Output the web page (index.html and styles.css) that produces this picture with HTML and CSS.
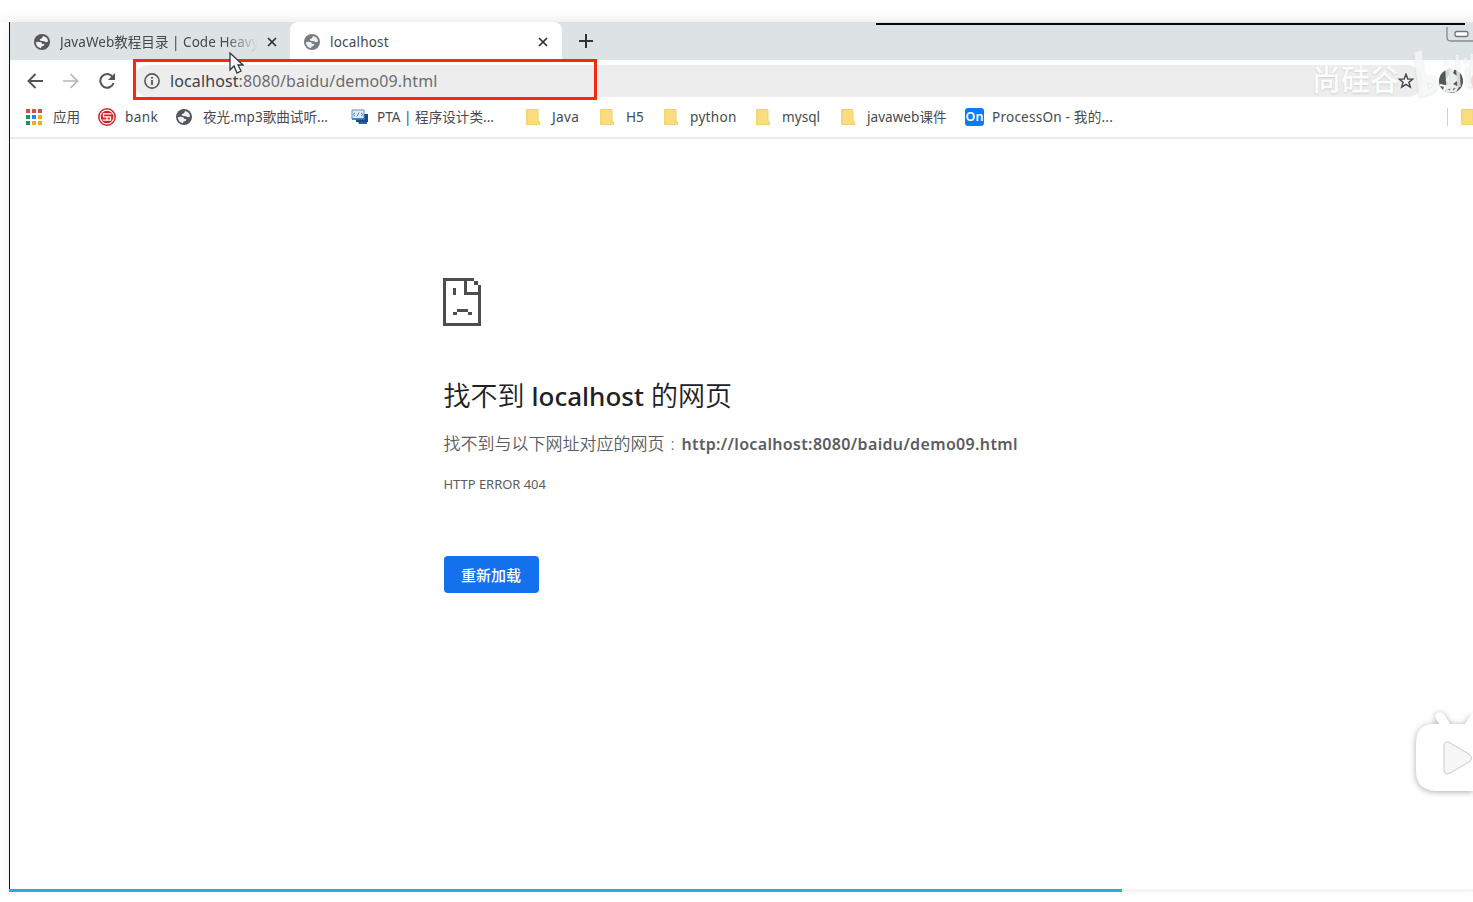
FILE: index.html
```html
<!DOCTYPE html>
<html lang="zh-CN">
<head>
<meta charset="utf-8">
<title>localhost</title>
<link rel="stylesheet" href="styles.css">
</head>
<body>
<svg class="defs" width="0" height="0">
  <symbol id="globe" viewBox="0 0 16 16"><circle cx="8" cy="8" r="8" fill="currentColor"/><path d="M1.800 8.200Q4 7.300 7.300 8.200L8 9.800 10.600 10.300 9.500 12 7.500 12.500 7 14.200Q2.500 13.500 1.800 8.200ZM9 2Q13.500 2.800 14.100 7.400L12 8.300 10 7.300 6.300 6.700 5.700 5.200 8 4.300Z" fill="#eef0f1"/></symbol>
  <symbol id="folder" viewBox="0 0 14 16"><path d="M1 0h11v12l2 1v3H1q-1 0-1-1V1q0-1 1-1Z" fill="#fbdd80"/><path d="M1 15.5h12.5V13L12 12V.5H1Z" fill="none" stroke="#efd06d"/></symbol>
  <symbol id="close" viewBox="0 0 10 10"><path d="m1 1 8 8m0-8-8 8" stroke="#2c3033" stroke-width="1.7" fill="none"/></symbol>
</svg>
<main class="window">
  <header class="tabs">
    <div class="tab">
      <svg class="globe"><use href="#globe"/></svg>
      <span class="tab-title fade">JavaWeb教程目录 | Code Heavy</span>
      <svg class="close"><use href="#close"/></svg>
    </div>
    <div class="tab active">
      <svg class="globe gray"><use href="#globe"/></svg>
      <span class="tab-title wide">localhost</span>
      <svg class="close"><use href="#close"/></svg>
    </div>
    <svg class="plus" viewBox="0 0 14 14"><path d="M7 0v14M0 7h14" stroke="#303539" stroke-width="2"/></svg>
  </header>
  <nav class="toolbar">
    <svg class="nav-icon" viewBox="0 0 16 16"><path d="M16 8H1.5M8.5 1 1.5 8l7 7" fill="none" stroke="#515458" stroke-width="1.9"/></svg>
    <svg class="nav-icon" viewBox="0 0 16 16"><path d="M0 8h14.5M7.500 1l7 7-7 7" fill="none" stroke="#b5b7b9" stroke-width="1.7"/></svg>
    <svg class="nav-icon" viewBox="0 0 16 16"><path d="M13.700 4A6.800 6.800 0 1 0 14.600 10" fill="none" stroke="#515458" stroke-width="2"/><path d="M16 0v7H9Z" fill="#515458"/></svg>
    <div class="address">
      <svg class="info" viewBox="0 0 16 16"><circle cx="8" cy="8" r="7.100" fill="none" stroke="#55585b" stroke-width="1.600"/><path d="M8 7v5M8 4v1.800" stroke="#55585b" stroke-width="1.800"/></svg>
      <span class="url"><b>localhost</b>:8080/baidu/demo09.html</span>
    </div>
  </nav>
  <nav class="bookmarks">
    <div class="mark shift apps-mark"><svg class="apps" viewBox="0 0 16 16"><path d="M0 0h4v4H0ZM6 0h4v4H6ZM12 0h4v4h-4Z" fill="#db4b3f"/><path d="M0 6h4v4H0Z" fill="#16965b"/><path d="M6 6h4v4H6Z" fill="#2583ee"/><path d="M12 6h4v4h-4ZM6 12h4v4H6ZM12 12h4v4h-4Z" fill="#efaf18"/><path d="M0 12h4v4H0Z" fill="#16965b"/></svg><span>应用</span></div>
    <div class="mark shift"><svg class="bank" viewBox="0 0 18 18"><circle cx="9" cy="9" r="8.200" fill="#fff" stroke="#cf2429" stroke-width="1.500"/><circle cx="9" cy="9" r="6.300" fill="#cf2429"/><path d="M13.500 5.800H5.500v3h7v3.400h-8M9 9v3" fill="none" stroke="#fff" stroke-width="1.300"/></svg><span>bank</span></div>
    <div class="mark shift song"><svg class="globe"><use href="#globe"/></svg><span>夜光.mp3歌曲试听...</span></div>
    <div class="mark"><svg class="pta" viewBox="0 0 18 16"><path d="M5 5h12v8H5Z" fill="#174b8d"/><path d="M7 13h9v2H8Z" fill="#2864a9"/><path d="M1 1h12v9H1Z" fill="#dcebf8" stroke="#5b91c5"/><path d="M1 10h13" stroke="#2e71b3" stroke-width="1.500"/><path d="m4 4-2 1.500L4 7m6-3 2 1.500L10 7M8 3.500l-2 4" fill="none" stroke="#5388b8"/></svg><span>PTA | 程序设计类...</span></div>
    <div class="mark folder-mark"><svg class="folder"><use href="#folder"/></svg><span>Java</span></div>
    <div class="mark"><svg class="folder"><use href="#folder"/></svg><span>H5</span></div>
    <div class="mark folder-mark"><svg class="folder"><use href="#folder"/></svg><span>python</span></div>
    <div class="mark"><svg class="folder"><use href="#folder"/></svg><span>mysql</span></div>
    <div class="mark"><svg class="folder"><use href="#folder"/></svg><span>javaweb课件</span></div>
    <div class="mark shift process"><i class="on">On</i><span>ProcessOn - 我的...</span></div>
    <div class="mark more"><svg class="folder"><use href="#folder"/></svg></div>
  </nav>
  <section class="page">
    <svg class="sad" viewBox="0 0 38 48"><path d="M0 0h31v3H3v42h32V17H21V3h3v11h11V7h3v41H0ZM31 3h4v4h-4ZM10 10h3v7h-3ZM14 31h11v3H14ZM10 34h4v3h-4ZM25 34h4v3h-4Z" fill="#4d4d4f"/></svg>
    <h1>找不到 <b>localhost</b> 的网页</h1>
    <p class="summary"><span>找不到与以下网址对应的网页<em>:</em></span><b>http://localhost:8080/baidu/demo09.html</b></p>
    <p class="code">HTTP ERROR 404</p>
    <button class="reload">重新加载</button>
  </section>
</main>
<div class="progress"><div class="played"></div></div>
<div class="highlight"></div>
<div class="topline"></div>
<svg class="minimize" viewBox="0 0 27 16"><path d="M1 0v10q0 4 4 4h22" fill="none" stroke="#858b8f" stroke-width="1.300"/><rect x="9" y="4.500" width="13" height="5" rx="2" fill="#fff" stroke="#6e7478" stroke-width="1.300"/></svg>
<svg class="star" viewBox="0 0 16 16"><path d="m8 1.200 1.800 4.700 5 .2-3.900 3.100 1.400 4.900L8 11.300l-4.300 2.800 1.400-4.900L1.200 6.100l5-.2Z" fill="#f8f8f8" stroke="#45494c" stroke-width="1.500"/></svg>
<svg class="profile" viewBox="0 0 36 28"><circle cx="14" cy="14" r="12" fill="#53595b"/><path d="M11 1 18 2 16 6 20 9 20 14 16 17 22 20 19 25 9 26 7 20 12 17 9 13 12 8Z" fill="#eceeee"/><path d="m3 18 5 1-1 5" stroke="#fff" stroke-width="2" fill="none"/><path d="m11 21 2 2m5-2-2 2" stroke="#777c7d" stroke-width="1.500"/><circle cx="45" cy="14" r="11" fill="#e96251"/></svg>
<div class="watermark">尚硅谷</div>
<svg class="logo" viewBox="0 0 62 54"><path d="m3 4 8-3 2 25q15-2 15 8-1 11-20 14Z" fill="#f5f6f6"/><path d="m17 34 5 2-4 4Z" fill="#fff" stroke="#e1e2e2"/><path d="m36 20 1 20M46 6l2 32M35 11l1 4M56 18l1 20M54 9l1 4M61 5v33M40 17l2 4" fill="none" stroke="#f5f6f6" stroke-width="3.500"/></svg>
<svg class="cursor" viewBox="0 0 15 22"><path d="M1 1v17l4-4 3 7 4-2-3-6h5Z" fill="#f7f8f9" stroke="#34383b" stroke-width="1.300"/></svg>
<svg class="player" viewBox="0 0 77 100"><path d="M37 28h6l-3-5q-2-4 1-6 4-2 7 1l6 10h15l6-9q4-4 9 0v76H40q-20-1-20-20V48q0-20 17-20Z" fill="#fff"/><path d="M48 50v23q0 7 6 4l19-11q5-4 0-8L54 47q-6-3-6 3Z" fill="#f7f7f7" stroke="#c9c9c9" stroke-width="1"/></svg>
</body>
</html>
```
FILE: styles.css
```css
* { box-sizing: border-box; }
html, body { margin: 0; height: 100%; overflow: hidden; background: #fff; }
body { padding: 22px 0 0 9px; font-family: "Noto Sans", "Noto Sans CJK SC", sans-serif; background: linear-gradient(#fff 10px, #f8f8f8 22px, #fff 23px); }
svg { display: block; flex: none; }
.defs { position: absolute; }
.window { height: 867px; border-left: 1px solid #111; background: #fff; box-shadow: 0 0 10px #00000010; }
.tabs { height: 38px; background: #dde2e5; display: flex; align-items: center; }
.tab { width: 280px; height: 38px; padding: 1px 12px 0 24px; display: flex; align-items: center; }
.tab.active { width: 272px; padding-left: 14px; background: #fff; border-radius: 8px 8px 0 0; }
.globe { width: 16px; height: 16px; color: #54585b; }
.globe.gray { color: #777b83; }
.tab-title { margin-left: 10px; width: 199px; overflow: hidden; white-space: nowrap; font-size: 13.5px; line-height: 20px; letter-spacing: .2px; color: #45494d; }
.fade { letter-spacing: .05px; height: 22px; line-height: 22px; width: 198px; -webkit-mask-image: linear-gradient(90deg, #000 165px, transparent 198px); }
.wide { width: 200px; }
.tab-title + .close { width: 10px; height: 10px; margin-left: 9px; }
.tab.active .close { margin-left: 8px; }
.plus { width: 14px; height: 14px; margin-left: 17px; }
.toolbar { height: 42px; display: flex; align-items: center; gap: 20px; padding-left: 17px; }
.nav-icon { width: 16px; height: 16px; }
.address { width: 1290px; height: 32px; margin-left: -2px; padding-left: 11px; display: flex; align-items: center; gap: 10px; background: #ededed; border-radius: 16px; }
.info { width: 16px; height: 16px; }
.url { font-size: 16px; letter-spacing: .11px; color: #6b6e71; white-space: nowrap; }
.url b { font-weight: 400; color: #3d4144; }
.bookmarks { height: 37px; padding: 0 0 5px 16px; display: grid; grid-template-columns: 72px 78px 175px 175px 74px 64px 92px 85px 124px 482px 26px; align-items: center; border-bottom: 2px solid #ebebeb; font-size: 13.6px; color: #474b4f; overflow: hidden; }
.mark { display: grid; grid-template-columns: 26px auto; align-items: center; justify-content: start; white-space: nowrap; }
.mark span { line-height: 20px; }
.folder-mark { letter-spacing: .3px; }
.shift { grid-template-columns: 27px auto; letter-spacing: .35px; }
.apps-mark { letter-spacing: 0; }
.song { letter-spacing: 0; }
.process { letter-spacing: .2px; }
.apps { width: 16px; height: 16px; }
.bank { width: 18px; height: 18px; }
.pta { width: 18px; height: 16px; }
.folder { width: 14px; height: 16px; }
.on { width: 19px; height: 18px; border-radius: 3px; background: #087cf7; color: #fff; font: 600 12.5px/18px "Noto Sans", sans-serif; letter-spacing: 0; text-align: center; }
.more { height: 18px; border-left: 1px solid #d0d0d0; padding-left: 13px; }
.page { padding: 139px 0 0 433.500px; }
.sad { width: 38px; height: 48px; margin-left: -.500px; }
h1 { margin: 50px 0 0; height: 40px; font: 350 27px/40px "Noto Sans", "Noto Sans CJK SC", sans-serif; color: #202124; white-space: nowrap; }
h1 b { font-weight: 500; font-size: 26px; }
p { margin: 0; white-space: nowrap; color: #5b5d60; }
.summary { margin-top: 16px; height: 24px; font-size: 17px; line-height: 24px; display: flex; }
.summary span { width: 238px; font-weight: 350; }
.summary em { font-style: normal; padding-left: 6px; }
.summary b { font-size: 16px; font-weight: 600; letter-spacing: .34px; }
.code { margin-top: 18px; font-size: 13px; line-height: 20px; letter-spacing: -.04px; }
.reload { display: block; margin: 62px 0 0; width: 95px; height: 37px; border: 0; border-radius: 4px; background: #1471ee; color: #fff; font: 500 15px "Noto Sans CJK SC", sans-serif; }
.progress { height: 3px; background: #f4f4f4; }
.played { height: 3px; width: 1113px; background: #23ade5; }
.highlight { position: absolute; left: 133px; top: 59px; width: 464px; height: 41px; border: 3px solid #f5290c; }
.topline { position: absolute; left: 876px; top: 23px; width: 589px; height: 2px; background: #080808; }
.minimize { position: absolute; left: 1446px; top: 27px; width: 27px; height: 16px; }
.star { position: absolute; left: 1398px; top: 73px; width: 16px; height: 16px; }
.profile { position: absolute; left: 1437px; top: 67px; width: 36px; height: 28px; overflow: hidden; }
.watermark { position: absolute; left: 1312px; top: 57px; font: 500 29px/42px "Noto Sans CJK SC", sans-serif; color: #fffffff0; text-shadow: 0 1px 2px #0002; white-space: nowrap; }
.logo { position: absolute; left: 1411px; top: 49px; width: 62px; height: 54px; opacity: .8; filter: drop-shadow(0 1px 1px #0002); }
.cursor { position: absolute; left: 229px; top: 52px; width: 15px; height: 22px; }
.player { position: absolute; left: 1396px; top: 696px; width: 77px; height: 100px; filter: drop-shadow(0 1px 3px #0005); }
```
